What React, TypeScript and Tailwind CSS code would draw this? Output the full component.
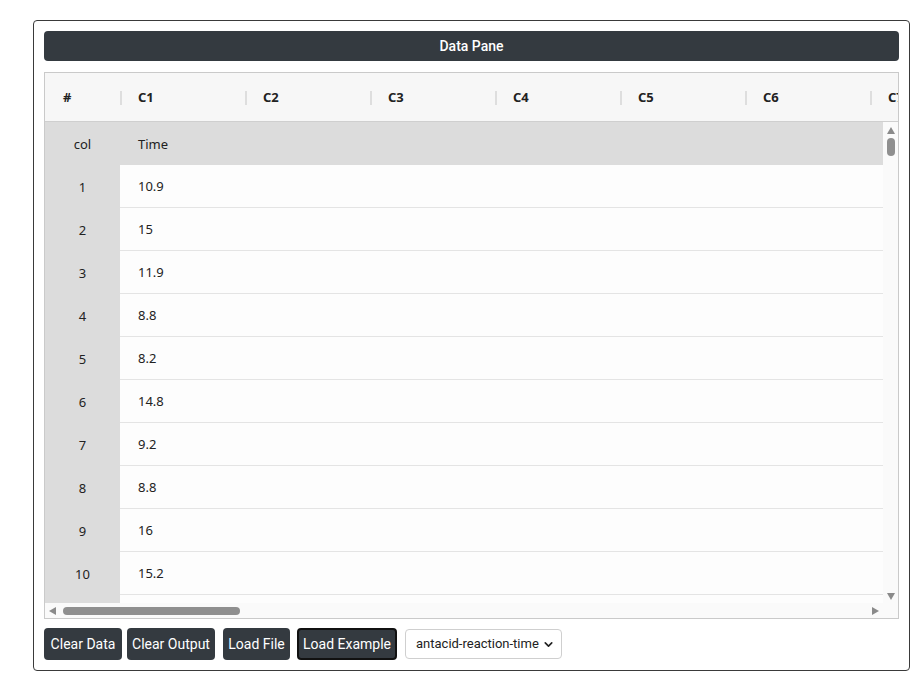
import { ChevronDown } from 'lucide-react'

const values = ['10.9', '15', '11.9', '8.8', '8.2', '14.8', '9.2', '8.8', '16', '15.2', '']
const cols = ['C1', 'C2', 'C3', 'C4', 'C5', 'C6', 'C7']

function Tri({ dir }: { dir: 'up' | 'down' | 'left' | 'right' }) {
  const pts = {
    up: '4,0 8,7 0,7',
    down: '0,0 8,0 4,7',
    left: '7,0 7,8 0,4',
    right: '0,0 7,4 0,8',
  }[dir]
  const w = dir === 'up' || dir === 'down' ? 8 : 7
  const h = dir === 'up' || dir === 'down' ? 7 : 8
  return (
    <svg width={w} height={h} viewBox={`0 0 ${w} ${h}`}>
      <polygon points={pts} fill="#8a8a8a" />
    </svg>
  )
}

export default function App() {
  return (
    <div className="w-[923px] h-[677px] bg-white pt-[20px] pl-[33px]">
      <div className="w-[877px] h-[651px] border border-[#3a3a3a] rounded-[4px] p-[10px]">
        <div className="h-[30px] bg-[#343a40] rounded-[4px] text-white text-[14px] font-medium flex items-center justify-center font-['Roboto',sans-serif]">
          Data Pane
        </div>

        <div className="mt-[11px] h-[547px] border border-[#cacaca] flex flex-col font-['Noto_Sans',sans-serif] text-[13px] text-[#222]">
          {/* header row */}
          <div className="h-[49px] shrink-0 bg-[#f7f7f7] border-b border-[#cfcfcf] flex items-center pt-[2px] overflow-hidden whitespace-nowrap">
            <div className="w-[75px] shrink-0 pl-[18px] font-bold">#</div>
            {cols.map((c) => (
              <div key={c} className="w-[125px] shrink-0 flex items-center">
                <span className="w-[2px] h-[14px] bg-[#dedede]" />
                <span className="pl-[16px] font-bold">{c}</span>
              </div>
            ))}
          </div>

          {/* body */}
          <div className="h-[481px] flex">
            <div className="flex-1 overflow-hidden">
              <div className="h-[43px] bg-[#dcdcdc] flex items-center pt-[2px]">
                <div className="w-[75px] text-center">col</div>
                <div className="pl-[18px]">Time</div>
              </div>
              {values.map((v, i) => (
                <div key={i} className="h-[43px] flex">
                  <div className="w-[75px] shrink-0 bg-[#dcdcdc] flex items-center justify-center pt-[2px]">
                    {v ? i + 1 : ''}
                  </div>
                  <div className="flex-1 bg-[#fdfdfd] border-b border-[#e4e4e4] flex items-center pl-[18px] pt-[2px]">{v}</div>
                </div>
              ))}
            </div>
            <div className="w-[15px] shrink-0 bg-[#fafafa] flex flex-col items-center pt-[5px] pb-[3px]">
              <Tri dir="up" />
              <div className="mt-[4px] w-[8px] h-[18px] rounded-full bg-[#8f8f8f]" />
              <div className="flex-1" />
              <Tri dir="down" />
            </div>
          </div>

          {/* horizontal scrollbar */}
          <div className="h-[15px] shrink-0 bg-[#fafafa] flex items-center pl-[4px] pr-[19px]">
            <Tri dir="left" />
            <div className="ml-[7px] w-[177px] h-[8px] rounded-full bg-[#8f8f8f]" />
            <div className="flex-1" />
            <Tri dir="right" />
          </div>
        </div>

        <div className="mt-[9px] flex items-center font-['Roboto',sans-serif] text-[14px]">
          <button className="h-[32px] w-[78px] bg-[#343a40] text-white rounded-[4px]">Clear Data</button>
          <button className="ml-[5px] h-[32px] w-[88px] bg-[#343a40] text-white rounded-[4px]">Clear Output</button>
          <button className="ml-[8px] h-[32px] w-[67px] bg-[#343a40] text-white rounded-[4px]">Load File</button>
          <button className="ml-[7px] h-[32px] w-[100px] bg-[#343a40] text-white rounded-[4px] border-2 border-[#111]">Load Example</button>
          <div className="ml-[8px] h-[30px] w-[157px] border border-[#cfcfcf] rounded-[4px] bg-white flex items-center justify-between pl-[10px] pr-[6px] text-[13px] text-[#222]">
            <span>antacid-reaction-time</span>
            <ChevronDown size={13} strokeWidth={3} />
          </div>
        </div>
      </div>
    </div>
  )
}
